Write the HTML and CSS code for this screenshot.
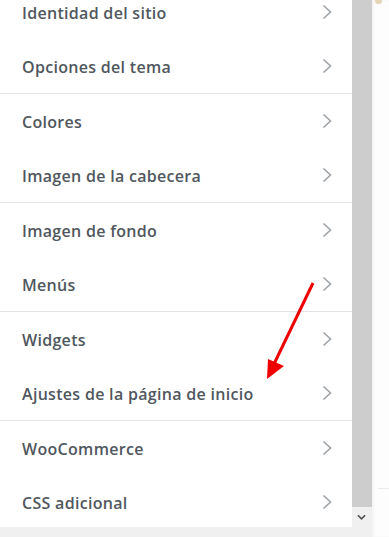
FILE: index.html
```html
<!DOCTYPE html>
<html lang="es">
<head>
    <meta charset="UTF-8">
    <title>Personalizar</title>
    <link rel="stylesheet" href="styles.css">
</head>
<body>
    <div class="screen">
        <div class="sidebar">
            <div class="viewport">
                <div class="panel">
                    <!-- grupos de secciones, dos por bloque -->
                    <ul class="group first">
                        <li class="section">Identidad del sitio<svg class="chev" viewBox="0 0 10 16"><path d="M1.5 1.5 L8.5 8 L1.5 14.5"/></svg></li>
                        <li class="section">Opciones del tema<svg class="chev" viewBox="0 0 10 16"><path d="M1.5 1.5 L8.5 8 L1.5 14.5"/></svg></li>
                    </ul>
                    <ul class="group">
                        <li class="section">Colores<svg class="chev" viewBox="0 0 10 16"><path d="M1.5 1.5 L8.5 8 L1.5 14.5"/></svg></li>
                        <li class="section">Imagen de la cabecera<svg class="chev" viewBox="0 0 10 16"><path d="M1.5 1.5 L8.5 8 L1.5 14.5"/></svg></li>
                    </ul>
                    <ul class="group">
                        <li class="section">Imagen de fondo<svg class="chev" viewBox="0 0 10 16"><path d="M1.5 1.5 L8.5 8 L1.5 14.5"/></svg></li>
                        <li class="section">Menús<svg class="chev" viewBox="0 0 10 16"><path d="M1.5 1.5 L8.5 8 L1.5 14.5"/></svg></li>
                    </ul>
                    <ul class="group">
                        <li class="section">Widgets<svg class="chev" viewBox="0 0 10 16"><path d="M1.5 1.5 L8.5 8 L1.5 14.5"/></svg></li>
                        <li class="section">Ajustes de la página de inicio<svg class="chev" viewBox="0 0 10 16"><path d="M1.5 1.5 L8.5 8 L1.5 14.5"/></svg></li>
                    </ul>
                    <ul class="group">
                        <li class="section">WooCommerce<svg class="chev" viewBox="0 0 10 16"><path d="M1.5 1.5 L8.5 8 L1.5 14.5"/></svg></li>
                        <li class="section">CSS adicional<svg class="chev" viewBox="0 0 10 16"><path d="M1.5 1.5 L8.5 8 L1.5 14.5"/></svg></li>
                    </ul>
                </div>
                <div class="scrollbar">
                    <div class="thumb"></div>
                    <div class="btn-down"><svg viewBox="0 0 10 6"><path d="M1 1 L5 5 L9 1"/></svg></div>
                </div>
            </div>
            <div class="footer-strip"></div>
        </div>
        <div class="preview">
            <div class="preview-mark"></div>
            <div class="preview-line"></div>
        </div>

        <!-- flecha roja encima de la lista -->
        <svg class="arrow" width="389" height="537" viewBox="0 0 389 537">
            <line x1="313" y1="283" x2="274" y2="364" />
            <polygon points="267,379 268,359 284,366" />
        </svg>
    </div>
</body>
</html>
```

FILE: styles.css
```css
html, body {
    margin: 0;
    padding: 0;
    background: #ffffff;
}

.screen {
    position: relative;
    display: flex;
    width: 389px;
    height: 537px;
    overflow: hidden;
}

.sidebar {
    display: flex;
    flex-direction: column;
    width: 372px;
}

.viewport {
    display: flex;
    height: 527px;
}

.panel {
    width: 352px;
    background: #ffffff;
    overflow: hidden;
}

.group {
    list-style: none;
    margin: 0;
    padding: 0;
    border-bottom: 1px solid #e4e4e6;
}
.group.first {
    margin-top: -15px;
}

.section {
    box-sizing: border-box;
    display: flex;
    align-items: center;
    justify-content: space-between;
    height: 54px;
    padding: 2px 20px 0 22px;
    font-family: "Open Sans", "Noto Sans", sans-serif;
    font-weight: 600;
    font-size: 16px;
    letter-spacing: 0.3px;
    color: #50575e;
}

.chev {
    width: 10px;
    height: 16px;
    margin-top: -3px;
}
.chev path {
    fill: none;
    stroke: #a0a5aa;
    stroke-width: 1.7;
}

/* barra de desplazamiento */
.scrollbar {
    display: flex;
    flex-direction: column;
    width: 20px;
    background: #f0f0f0;
}
.thumb {
    height: 507px;
    background: #cdcdcd;
}
.btn-down {
    flex: 1;
    display: flex;
    align-items: center;
    justify-content: center;
}
.btn-down svg {
    width: 9px;
    height: 6px;
    margin-left: -2px;
}
.btn-down path {
    fill: none;
    stroke: #505050;
    stroke-width: 1.8;
}

.footer-strip {
    height: 10px;
    background: #f0f0f1;
}

.preview {
    position: relative;
    flex: 1;
    background: #fdfdfd;
    box-shadow: inset 2px 0 3px rgba(0,0,0,0.04);
}
.preview-mark {
    width: 7px;
    height: 4px;
    margin-left: 3px;
    background: #e6d6b8;
    border-radius: 0 0 3px 3px;
}
.preview-line {
    margin-top: 484px;
    margin-left: 6px;
    height: 1px;
    background: #ececec;
}

.arrow {
    position: absolute;
    left: 0;
    top: 0;
    pointer-events: none;
}
.arrow line {
    stroke: #ee0000;
    stroke-width: 3;
}
.arrow polygon {
    fill: #ee0000;
}
```
